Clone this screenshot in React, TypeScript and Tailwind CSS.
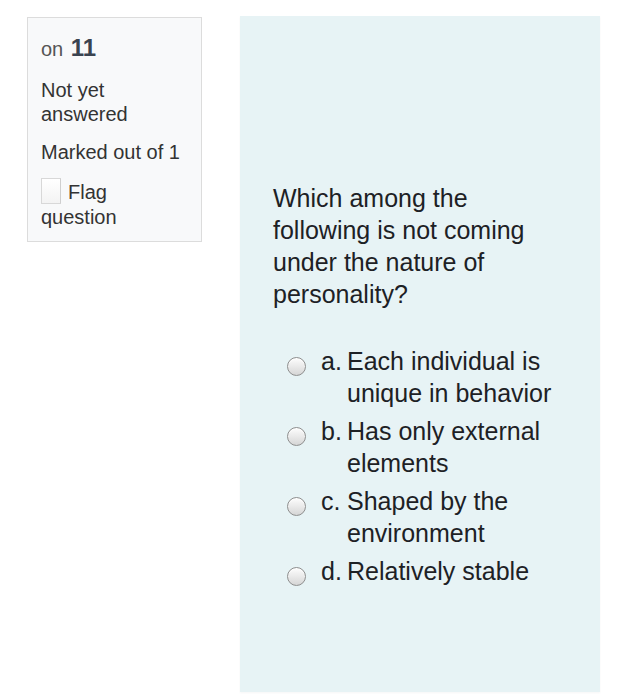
const options = [
  { label: 'a.', text: 'Each individual is unique in behavior' },
  { label: 'b.', text: 'Has only external elements' },
  { label: 'c.', text: 'Shaped by the environment' },
  { label: 'd.', text: 'Relatively stable' },
];

const Radio = () => (
  <span className="mt-[12px] block h-[19px] w-[19px] shrink-0 rounded-full border border-[#8e8e8e] bg-gradient-to-b from-[#fdfdfd] to-[#d6d6d6] shadow-[inset_0_1px_1px_rgba(255,255,255,0.9)]" />
);

export default function App() {
  return (
    <div className="min-h-[700px] bg-white font-['Liberation_Sans',Arial,sans-serif]">
      <div className="flex items-start pl-[27px] pt-[16px]">
        {/* Question info */}
        <div className="mt-[1px] h-[225px] w-[175px] shrink-0 border border-[#dcdcdc] bg-[#f8f9fa] px-[13px] pt-[14px] text-[20px] leading-[24px] text-[#333]">
          <div className="leading-[32px] text-[#555]">
            on <span className="ml-[2px] text-[24px] font-bold text-[#3a4350]">11</span>
          </div>
          <div className="mt-[13px]">Not yet answered</div>
          <div className="mt-[14px]">Marked out of 1</div>
          <div className="mt-[16px]">
            <span className="-my-[2px] mr-[7px] inline-block h-[26px] w-[20px] -translate-y-[3px] border border-[#d8d8d8] border-r-[#cfcfcf] bg-gradient-to-b from-white to-[#f3f3f3] align-middle" />
            Flag question
          </div>
        </div>

        {/* Question text */}
        <div className="ml-[38px] h-[676px] w-[360px] shrink-0 bg-[#e7f3f5] px-[33px] pt-[166px] text-[25px] leading-[32px] text-[#1d2125] shadow-[0_1px_2px_rgba(0,0,0,0.04)]">
          <p className="w-[290px]">Which among the following is not coming under the nature of personality?</p>

          <div className="ml-[14px] mt-[35px]">
            {options.map((opt, i) => (
              <div key={opt.label} className={`flex items-start ${i > 0 ? 'mt-[6px]' : ''}`}>
                <Radio />
                <span className="ml-[15px] w-[26px] shrink-0">{opt.label}</span>
                <span className="w-[215px]">{opt.text}</span>
              </div>
            ))}
          </div>
        </div>
      </div>
    </div>
  );
}
